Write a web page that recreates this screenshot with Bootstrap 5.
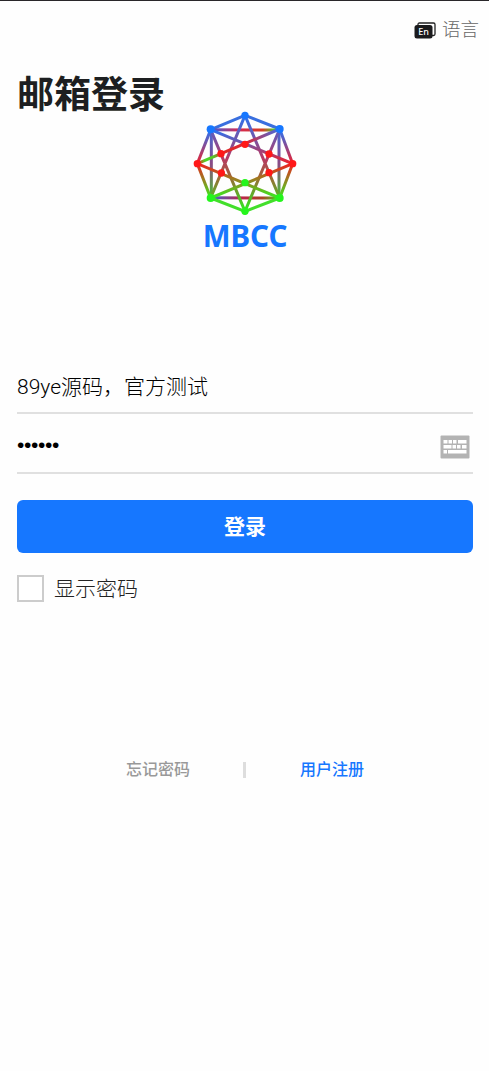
<!DOCTYPE html>
<html lang="zh-CN">
<head>
<meta charset="utf-8">
<meta name="viewport" content="width=device-width, initial-scale=1">
<title>邮箱登录</title>
<link href="https://cdn.jsdelivr.net/npm/bootstrap@5.3.0/dist/css/bootstrap.min.css" rel="stylesheet">
<style>
body{font-family:"Liberation Sans","Noto Sans CJK SC",sans-serif;background:#fefefe;color:#1d1f21;border-top:1px solid #29272a;min-height:100vh;overflow-x:hidden}
.page{padding:0 16px 0 17px}
.lang{height:58px;margin-right:-6px;gap:6px;font-size:18.5px;font-weight:300;color:#666}
.title{font-size:37px;line-height:54px;height:52px;margin-top:6px;font-weight:700;font-family:"Noto Sans CJK SC",sans-serif}
.logo{margin-top:-12px;height:110px}
.brand{font:700 29.500px/34px "Noto Sans","Open Sans",sans-serif;color:#1677ff;height:34px;margin-top:4px}
.field{height:60px;border-bottom:2px solid #e0e0e0;padding-right:3px}
.field input{font-family:Roboto,"Noto Sans CJK SC",sans-serif;font-size:21px;font-weight:300;line-height:30px;color:#000;height:32px;margin-top:4px}
.field input.secret{font-family:"Liberation Sans",sans-serif;font-weight:400;letter-spacing:-.35px}
.field svg{margin-top:7px}
.fields{margin-top:101px}
.login{height:53px;margin-top:26px;border-radius:6px;background:#1677ff;color:#fff;font-size:21px;font-weight:700}
.showpw{margin-top:22px;height:27px;gap:10px;font-size:21px;font-weight:300;color:#222}
.showpw .form-check-input[type=checkbox]{width:27px;height:27px;border:2px solid #ccc;border-radius:0}
.links{margin-top:156px;height:24px;font-size:16px;font-weight:500}
.links a{text-decoration:none}
.forgot{color:#999;width:63px}
.signup{color:#1677ff}
.sep{width:3px;height:16px;background:#ddd;margin:0 54px 0 54px}
</style>
</head>
<body>
<main class="page d-flex flex-column">
  <div class="lang d-flex align-items-center justify-content-end">
    <svg width="22" height="17" viewBox="0 0 22 17"><path d="M4 3V2.500Q4 1 5.500 1H19.500Q21 1 21 2.500V12Q21 13.500 19.500 13.500H18" fill="none" stroke="#222" stroke-width="1.300"/><rect x=".5" y="3" width="18" height="13.500" rx="2.500" fill="#1b1b1d"/><text x="9.500" y="13" text-anchor="middle" font-family="Noto Sans" font-size="9" font-weight="500" fill="#fff">En</text></svg>
    <span>语言</span>
  </div>
  <h1 class="title mb-0">邮箱登录</h1>
  <div class="logo d-flex justify-content-center">
    <svg width="120" height="110" viewBox="0 0 360 330">
      <defs>
        <linearGradient id="br" gradientUnits="userSpaceOnUse" x1="0" y1="74" x2="0" y2="176"><stop stop-color="#2674f5"/><stop offset="1" stop-color="#ef202b"/></linearGradient>
        <linearGradient id="rg" gradientUnits="userSpaceOnUse" x1="0" y1="176" x2="0" y2="279"><stop stop-color="#ee2020"/><stop offset="1" stop-color="#36ee20"/></linearGradient>
        <linearGradient id="bg" gradientUnits="userSpaceOnUse" x1="0" y1="74" x2="0" y2="279"><stop stop-color="#426bdc"/><stop offset=".5" stop-color="#8b4a84"/><stop offset="1" stop-color="#48c330"/></linearGradient>
        <linearGradient id="tb" gradientUnits="userSpaceOnUse" x1="0" y1="31" x2="0" y2="319"><stop stop-color="#2674f5"/><stop offset=".45" stop-color="#b83a64"/><stop offset=".65" stop-color="#9b6a35"/><stop offset="1" stop-color="#28f020"/></linearGradient>
        <linearGradient id="ht" gradientUnits="userSpaceOnUse" x1="77" y1="0" x2="284" y2="0"><stop stop-color="#3d62dc"/><stop offset=".4" stop-color="#d42955"/><stop offset=".75" stop-color="#d53c22"/><stop offset=".93" stop-color="#48d22a"/></linearGradient>
        <linearGradient id="hb" gradientUnits="userSpaceOnUse" x1="77" y1="0" x2="284" y2="0"><stop stop-color="#4265d5"/><stop offset=".45" stop-color="#bb254a"/><stop offset=".75" stop-color="#a94423"/><stop offset="1" stop-color="#39e422"/></linearGradient>
        <linearGradient id="lg" gradientUnits="userSpaceOnUse" x1="37" y1="176" x2="284" y2="72"><stop stop-color="#ff1c1c"/><stop offset=".1" stop-color="#49d823"/><stop offset=".2" stop-color="#58c329"/><stop offset=".3" stop-color="#e32a24"/><stop offset=".6" stop-color="#dc2738"/><stop offset="1" stop-color="#3b70e6"/></linearGradient>
      </defs>
      <g fill="none" stroke-width="9">
        <path stroke="#396fdf" d="M77 74L180 31L284 72"/>
        <path stroke="url(#ht)" d="M77 74L284 75V74"/>
        <path stroke="url(#hb)" d="M77 278L284 279V278"/>
        <path stroke="url(#bg)" d="M79 74V279M282 74V279"/>
        <path stroke="url(#tb)" d="M77 279L180 31L284 279M77 74L180 319L284 72"/>
        <path stroke="url(#br)" d="M37 176L77 74L323 176L284 72"/>
        <path stroke="url(#lg)" d="M37 176L284 72"/>
        <path stroke="url(#rg)" d="M323 176L284 279L37 176L77 279L323 176"/>
        <path stroke="#42df2b" d="M77 279L180 319L284 279"/>
      </g>
      <g fill="#1677ff"><circle cx="180" cy="31" r="11"/><circle cx="77" cy="73" r="12"/><circle cx="284" cy="72" r="12"/></g>
      <g fill="#ff1818"><circle cx="37" cy="176" r="11"/><circle cx="323" cy="176" r="11"/><circle cx="180" cy="118" r="11"/><circle cx="108" cy="146" r="11"/><circle cx="252" cy="147" r="11"/><circle cx="109" cy="204" r="11"/><circle cx="252" cy="203" r="11"/></g>
      <g fill="#24f51c"><circle cx="180" cy="233" r="11"/><circle cx="77" cy="279" r="12"/><circle cx="284" cy="279" r="12"/><circle cx="180" cy="319" r="11"/></g>
    </svg>
  </div>
  <div class="brand text-center">MBCC</div>
  <form class="fields">
    <div class="field d-flex align-items-center"><input class="border-0 p-0 w-100 bg-transparent" type="text" value="89ye源码，官方测试" aria-label="邮箱"></div>
    <div class="field d-flex align-items-center"><input class="secret border-0 p-0 flex-grow-1 bg-transparent" type="text" value="••••••" aria-label="密码">
      <svg width="30" height="24" viewBox="0 0 30 24"><rect x=".5" y=".5" width="29" height="23" rx="1" fill="#b3b3b3"/><path fill="#fff" d="M3.500 5h4v3.500h-4zM8.500 5h3.500v3.500H8.500zM13 5h3.500v3.500H13zM18 5h8.500v3.500H18zM3.500 10h8v3.500h-8zM12.500 10h3.500v3.500h-3.500zM17 10h3.500v3.500H17zM22 10h4.500v3.500H22zM3.500 15h3.500v3.500H3.500zM8 15h18.500v3.500H8z"/></svg>
    </div>
    <button type="button" class="login btn w-100 border-0 p-0">登录</button>
    <label class="showpw d-flex align-items-center"><input class="form-check-input m-0" type="checkbox"><span>显示密码</span></label>
  </form>
  <nav class="links d-flex align-items-center justify-content-center">
    <a class="forgot text-nowrap" href="#">忘记密码</a><span class="sep"></span><a class="signup text-nowrap" href="#">用户注册</a>
  </nav>
</main>
<script src="https://cdn.jsdelivr.net/npm/bootstrap@5.3.0/dist/js/bootstrap.bundle.min.js"></script>
</body>
</html>
